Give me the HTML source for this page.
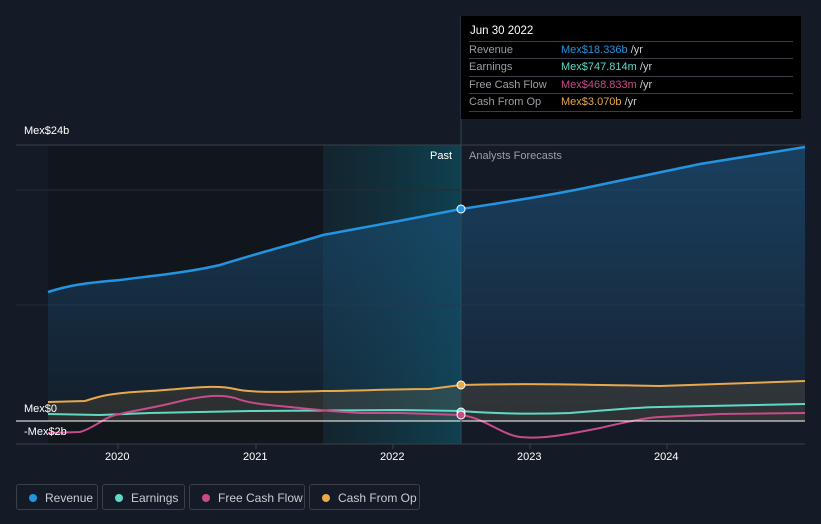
<!DOCTYPE html><html><head><style>
body{margin:0;width:821px;height:524px;background:#151b26;font-family:"Liberation Sans",sans-serif;overflow:hidden;position:relative}
.tt{position:absolute;left:461px;top:16px;width:340px;height:103px;background:#000;color:#fff;font-size:11px}
.tt .h{position:absolute;left:9px;top:9px;font-size:11.5px}
.row{position:absolute;left:8px;width:324px;border-top:1px solid #3a3f47;height:17px;line-height:17px;color:#9a9ea5}
.row span{position:absolute;left:92px}
.row i{font-style:normal;color:#c8ccd2}
.lg{position:absolute;top:484px;height:26px;border:1px solid #3a3f4a;border-radius:3px;color:#c8ccd2;font-size:12px;line-height:26px;box-sizing:border-box}
.lg b{position:absolute;left:12px;top:9px;width:8px;height:8px;border-radius:50%}
.lg span{position:absolute;left:28px}
.ax{position:absolute;color:#fff;font-size:11px}
</style></head><body>
<svg width="821" height="524" style="position:absolute;left:0;top:0">
<defs><linearGradient id="hl" x1="0" x2="1"><stop offset="0" stop-color="#0f3a44" stop-opacity=".3"/><stop offset="1" stop-color="#0e4a5a" stop-opacity=".8"/></linearGradient>
<linearGradient id="rf" x1="0" y1="0" x2="0" y2="1"><stop offset="0" stop-color="#1b4f78" stop-opacity=".7"/><stop offset="1" stop-color="#1b4f78" stop-opacity=".15"/></linearGradient></defs>
<rect x="48" y="145" width="275" height="299" fill="#11151c"/>
<rect x="323" y="145" width="138" height="299" fill="url(#hl)"/>
<line x1="16" y1="145" x2="805" y2="145" stroke="#3a404a"/>
<line x1="16" y1="190" x2="805" y2="190" stroke="#262c36"/>
<line x1="16" y1="305" x2="805" y2="305" stroke="#262c36"/>
<path d="M48,292 C70,285 85,283 120,280 C150,276 185,273 220,265 C255,254 290,245 323,235 C360,228 400,221 430,215 L461,209 C500,203 540,197 580,189 L700,164 L805,147 L805,421 L48,421Z" fill="url(#rf)"/>
<path d="M48,292 C70,285 85,283 120,280 C150,276 185,273 220,265 C255,254 290,245 323,235 C360,228 400,221 430,215 L461,209 C500,203 540,197 580,189 L700,164 L805,147" fill="none" stroke="#2394df" stroke-width="2.5"/>
<path d="M48,402 L85,401 C100,396 110,393 150,391 C185,389 215,384 235,389 C250,393 290,392 323,391 C355,391 390,389 430,389 L461,385 C530,383 600,385 660,386 L805,381 L805,421 L48,421Z" fill="#e8a84c" fill-opacity=".12"/>
<path d="M48,402 L85,401 C100,396 110,393 150,391 C185,389 215,384 235,389 C250,393 290,392 323,391 C355,391 390,389 430,389 L461,385 C530,383 600,385 660,386 L805,381" fill="none" stroke="#e8a84c" stroke-width="2"/>
<path d="M48,414 L100,415 L150,413 L250,411 L400,410 L461,411 C500,414 540,414 570,413 C610,410 640,407 660,407 L805,404" fill="none" stroke="#5fd9c6" stroke-width="2"/>
<path d="M48,433 L80,432 C95,428 105,416 120,414 C135,410 150,409 185,400 C205,396 220,394 235,398 C250,404 270,405 290,407 C310,409 323,411 360,413 L400,413 L461,415 C485,418 500,434 520,437 C540,439 560,436 600,428 C630,421 650,417 660,417 L720,414 L805,413" fill="none" stroke="#c84b8a" stroke-width="2"/>
<line x1="16" y1="421" x2="805" y2="421" stroke="#fff" stroke-width="1"/>
<line x1="16" y1="444" x2="805" y2="444" stroke="#3a404a"/>
<g stroke="#3a404a"><line x1="118" y1="444" x2="118" y2="449"/><line x1="256" y1="444" x2="256" y2="449"/><line x1="393" y1="444" x2="393" y2="449"/><line x1="530" y1="444" x2="530" y2="449"/><line x1="667" y1="444" x2="667" y2="449"/></g>
<line x1="461" y1="16" x2="461" y2="444" stroke="#2a4a55"/>
<circle cx="461" cy="209" r="4" fill="#2394df" stroke="#fff"/>
<circle cx="461" cy="385" r="4" fill="#e8a84c" stroke="#fff"/>
<circle cx="461" cy="412" r="4" fill="#5fd9c6" stroke="#fff"/>
<circle cx="461" cy="415" r="4" fill="#c84b8a" stroke="#fff"/>
</svg>
<div class="tt"><div class="h">Jun 30 2022</div>
<div class="row" style="top:25px">Revenue<span style="color:#2394df">Mex$18.336b <i>/yr</i></span></div>
<div class="row" style="top:42px">Earnings<span style="color:#5fd9c6">Mex$747.814m <i>/yr</i></span></div>
<div class="row" style="top:60px">Free Cash Flow<span style="color:#c84b8a">Mex$468.833m <i>/yr</i></span></div>
<div class="row" style="top:77px">Cash From Op<span style="color:#e8a84c">Mex$3.070b <i>/yr</i></span></div>
<div class="row" style="top:95px;height:0"></div></div>
<div class="ax" style="left:24px;top:125px">Mex$24b</div>
<div class="ax" style="left:24px;top:403px">Mex$0</div>
<div class="ax" style="left:24px;top:426px">-Mex$2b</div>
<div class="ax" style="left:430px;top:150px">Past</div>
<div class="ax" style="left:469px;top:150px;color:#9a9ea5">Analysts Forecasts</div>
<div class="ax" style="left:105px;top:451px">2020</div>
<div class="ax" style="left:243px;top:451px">2021</div>
<div class="ax" style="left:380px;top:451px">2022</div>
<div class="ax" style="left:517px;top:451px">2023</div>
<div class="ax" style="left:654px;top:451px">2024</div>
<div class="lg" style="left:16px;width:82px"><b style="background:#2394df"></b><span>Revenue</span></div>
<div class="lg" style="left:102px;width:83px"><b style="background:#5fd9c6"></b><span>Earnings</span></div>
<div class="lg" style="left:189px;width:116px"><b style="background:#c84b8a"></b><span>Free Cash Flow</span></div>
<div class="lg" style="left:309px;width:111px"><b style="background:#e8a84c"></b><span>Cash From Op</span></div>
</body></html>
